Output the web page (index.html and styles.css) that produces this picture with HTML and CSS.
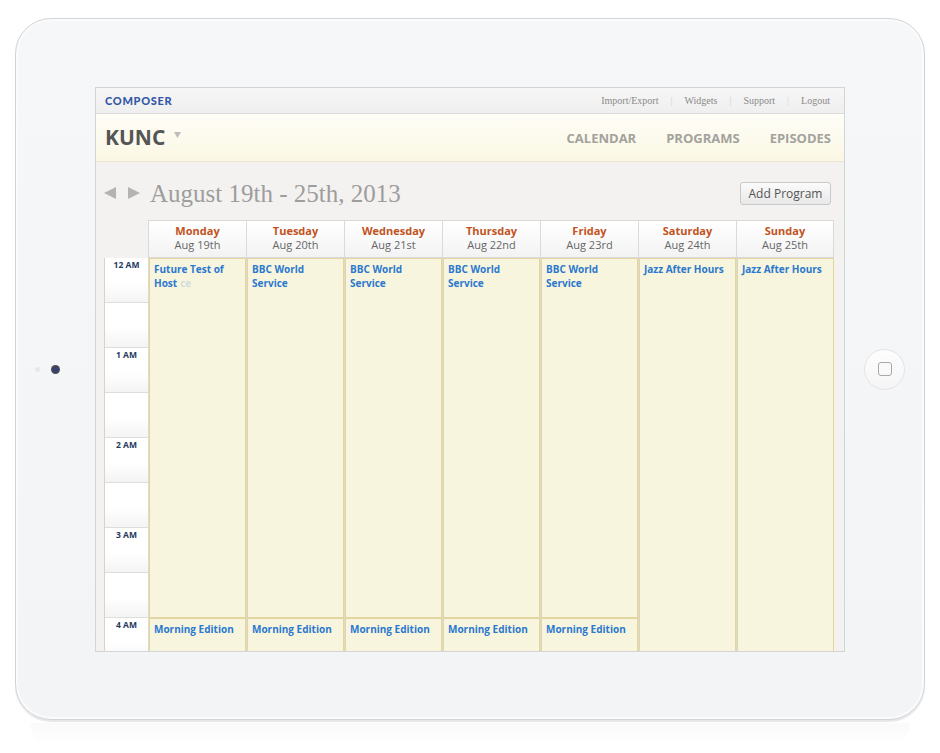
FILE: index.html
```html
<!DOCTYPE html>
<html>
<head>
<meta charset="utf-8">
<title>Composer - KUNC Calendar</title>
<link rel="stylesheet" href="styles.css">
</head>
<body>
<div class="device">
  <div class="side"><span class="camera"></span></div>
  <div class="screen">
    <div class="topbar">
      <span class="brand">COMPOSER</span>
      <nav class="util">
        <a>Import/Export</a><span class="sep">|</span>
        <a>Widgets</a><span class="sep">|</span>
        <a>Support</a><span class="sep">|</span>
        <a>Logout</a>
      </nav>
    </div>
    <div class="header">
      <div class="station">KUNC
        <svg class="caret" width="7" height="6" viewBox="0 0 7 6"><polygon points="0,0 7,0 3.5,6" fill="#bdbdbd"/></svg>
      </div>
      <nav class="mainnav">
        <a>CALENDAR</a>
        <a>PROGRAMS</a>
        <a>EPISODES</a>
      </nav>
    </div>
    <div class="content">
      <div class="daterow">
        <svg class="arrow" width="12" height="12" viewBox="0 0 12 12"><polygon points="12,0 12,12 0,6" fill="#b3b3b3"/></svg>
        <svg class="arrow next" width="12" height="12" viewBox="0 0 12 12"><polygon points="0,0 0,12 12,6" fill="#b3b3b3"/></svg>
        <h1 class="title">August 19th - 25th, 2013</h1>
        <button class="btn">Add Program</button>
      </div>
      <div class="calendar">
        <div class="corner"></div>
        <div class="dayhead"><b>Monday</b><span>Aug 19th</span></div>
        <div class="dayhead"><b>Tuesday</b><span>Aug 20th</span></div>
        <div class="dayhead"><b>Wednesday</b><span>Aug 21st</span></div>
        <div class="dayhead"><b>Thursday</b><span>Aug 22nd</span></div>
        <div class="dayhead"><b>Friday</b><span>Aug 23rd</span></div>
        <div class="dayhead"><b>Saturday</b><span>Aug 24th</span></div>
        <div class="dayhead last"><b>Sunday</b><span>Aug 25th</span></div>

        <div class="times">
          <div class="slot"><span>12 AM</span></div>
          <div class="slot"></div>
          <div class="slot"><span>1 AM</span></div>
          <div class="slot"></div>
          <div class="slot"><span>2 AM</span></div>
          <div class="slot"></div>
          <div class="slot"><span>3 AM</span></div>
          <div class="slot"></div>
          <div class="slot"><span>4 AM</span></div>
          <div class="slot"></div>
        </div>
        <div class="day">
          <div class="event overnight"><span>Future Test of</span><br><span>Host</span><span class="ghost">ce</span></div>
          <div class="event">Morning Edition</div>
        </div>
        <div class="day">
          <div class="event overnight">BBC World Service</div>
          <div class="event">Morning Edition</div>
        </div>
        <div class="day">
          <div class="event overnight">BBC World Service</div>
          <div class="event">Morning Edition</div>
        </div>
        <div class="day">
          <div class="event overnight">BBC World Service</div>
          <div class="event">Morning Edition</div>
        </div>
        <div class="day">
          <div class="event overnight">BBC World Service</div>
          <div class="event">Morning Edition</div>
        </div>
        <div class="day">
          <div class="event long">Jazz After Hours</div>
        </div>
        <div class="day">
          <div class="event long">Jazz After Hours</div>
        </div>
      </div>
    </div>
  </div>
  <div class="side"><span class="home"><span class="home-square"></span></span></div>
</div>
<div class="reflection"></div>
</body>
</html>
```

FILE: styles.css
```css
* { box-sizing: border-box; }
html, body { margin: 0; background: #ffffff; }
body { font-family: "Open Sans", "DejaVu Sans", sans-serif; }

.device {
  width: 910px;
  height: 702px;
  margin: 18px 0 0 15px;
  border: 1px solid #d2d3d5;
  border-radius: 36px;
  background: linear-gradient(#f6f7f9, #f3f4f6);
  display: flex;
  align-items: center;
  box-shadow: inset 0 0 0 2px #fafbfc, 0 2px 1px rgba(0,0,0,0.10);
}
.side {
  width: 79px;
  display: flex;
  justify-content: center;
  align-items: center;
}
.camera {
  position: relative;
  width: 9px;
  height: 9px;
  border-radius: 50%;
  background: radial-gradient(circle, #2e3f8c 0, #2e3f8c 1.5px, #3e434c 2.5px, #4a4e56 4.5px);
}
.camera::before {
  content: "";
  position: absolute;
  left: -16px;
  top: 2px;
  width: 5px;
  height: 5px;
  border-radius: 50%;
  background: #e6e7ea;
}
.home {
  width: 41px;
  height: 41px;
  border-radius: 50%;
  border: 1px solid #e3e4e6;
  background: linear-gradient(#fdfdfd, #f5f5f6);
  display: flex;
  align-items: center;
  justify-content: center;
}
.home-square {
  width: 14px;
  height: 14px;
  border: 1.5px solid #a7a8aa;
  border-radius: 3px;
}
.reflection {
  width: 880px;
  height: 24px;
  margin: 3px 0 0 30px;
  background: linear-gradient(#fafafb, #ffffff);
  border-radius: 0 0 30px 30px;
}

.screen {
  width: 750px;
  height: 565px;
  border: 1px solid #d4d4d4;
  background: #f3f2f0;
  overflow: hidden;
  display: flex;
  flex-direction: column;
}

.topbar {
  height: 26px;
  flex: none;
  border-bottom: 1px solid #dcdcdc;
  background: linear-gradient(#f6f6f6, #efefef);
  display: flex;
  align-items: center;
  justify-content: space-between;
  padding: 0 14px 0 9px;
}
.brand {
  font-family: Lato, "Open Sans", sans-serif;
  font-weight: 900;
  font-size: 11px;
  letter-spacing: 0.7px;
  color: #3458a8;
}
.util {
  font-family: "Liberation Serif", serif;
  font-size: 10px;
  color: #8a8a8a;
  display: flex;
}
.util .sep { color: #d2d2d2; padding: 0 12px; }

.header {
  height: 48px;
  flex: none;
  border-bottom: 1px solid #ebe6d4;
  background: linear-gradient(#fffef8, #faf7e3);
  display: flex;
  align-items: center;
  justify-content: space-between;
  padding: 0 13px 0 9px;
}
.station {
  font-weight: 700;
  font-size: 21px;
  color: #555555;
  display: flex;
  align-items: center;
  gap: 9px;
}
.caret { margin-top: -4px; }
.mainnav { display: flex; gap: 30px; padding-top: 2px; }
.mainnav a {
  font-weight: 700;
  font-size: 13px;
  color: #a3a29d;
}

.content { padding: 0 9px 0 8px; }
.daterow {
  height: 23px;
  margin: 20px 0 15px;
  display: flex;
  align-items: center;
}
.arrow { flex: none; }
.arrow.next { margin-left: 12px; }
.title {
  margin: 0 0 0 10px;
  font-family: "Liberation Serif", serif;
  font-weight: 400;
  font-size: 25px;
  line-height: 23px;
  color: #9d9d9d;
}
.btn {
  margin: 0 4px 0 auto;
  width: 91px;
  height: 23px;
  border: 1px solid #c8c8c8;
  border-radius: 3px;
  background: linear-gradient(#fbfbfb, #e8e8e8);
  font-family: "Open Sans", sans-serif;
  font-size: 12px;
  color: #555555;
  padding: 0;
}

.calendar {
  display: grid;
  grid-template-columns: 44px repeat(7, 98px);
  grid-template-rows: 38px 460px;
}
.dayhead {
  border-top: 1px solid #dadada;
  border-bottom: 1px solid #dadada;
  border-left: 1px solid #dadada;
  background: linear-gradient(#ffffff, #f3f3f3);
  display: flex;
  flex-direction: column;
  align-items: center;
  padding-top: 3px;
  font-size: 11px;
  line-height: 14px;
}
.dayhead.last { border-right: 1px solid #dadada; }
.dayhead b { color: #c2531d; font-weight: 700; }
.dayhead span { color: #666666; }

.times {
  border-left: 1px solid #d3d3d3;
  background: #ffffff;
}
.slot {
  height: 45px;
  border-bottom: 1px solid #dddddd;
  background: linear-gradient(#ffffff 55%, #f4f4f4);
  text-align: center;
  padding-top: 2px;
  font-size: 8.5px;
  line-height: 10px;
  font-weight: 700;
  color: #263a5f;
}

.day {
  background: #dcd9cf;
  padding-left: 1px;
  display: flex;
  flex-direction: column;
}
.event {
  background: #f7f5dd;
  border: 1px solid #e2d59f;
  padding: 3px 4px;
  font-size: 10px;
  line-height: 14px;
  font-weight: 700;
  color: #2a78d0;
  flex: 1;
}
.event.overnight { flex: none; height: 360px; }
.ghost { color: #2a78d0; opacity: 0.18; margin-left: 3px; }
```
